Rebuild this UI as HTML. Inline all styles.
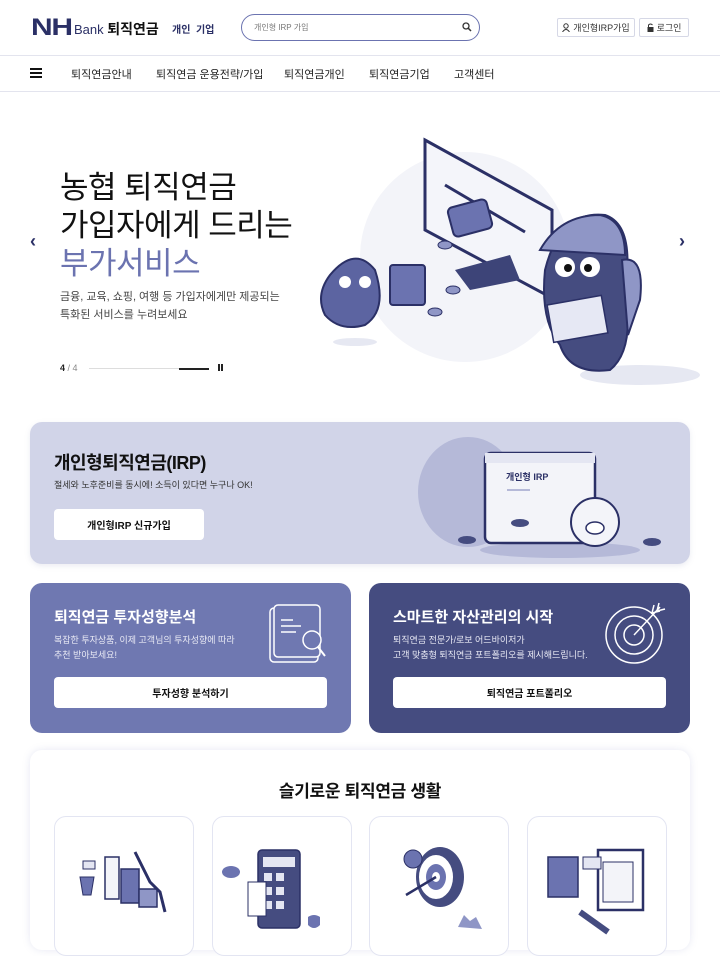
<!DOCTYPE html>
<html><head><meta charset="utf-8">
<style>
*{margin:0;padding:0;box-sizing:border-box}
body{width:720px;height:934px;overflow:hidden;background:#fff;font-family:"Liberation Sans","Noto Sans CJK KR",sans-serif;color:#111;position:relative}
.a{position:absolute}
.btn{position:absolute;border:1px solid #d6d8e6;border-radius:2px;font-size:9px;color:#333;display:flex;align-items:center;justify-content:center;gap:3px;background:#fff}
.nav span{position:absolute;top:66px;font-size:11px;color:#222}
.card{position:absolute;border-radius:12px}
.wbtn{position:absolute;background:#fff;border-radius:4px;font-size:10px;font-weight:bold;color:#111;display:flex;align-items:center;justify-content:center}
.tile{position:absolute;top:816px;width:140px;height:140px;border:1px solid #e3e5f2;border-radius:12px;background:#fff}
</style></head><body>
<!-- header -->
<div class="a" style="left:31px;top:14px;font-size:24px;font-weight:900;color:#2b3066;letter-spacing:-1px;transform:scaleX(1.25);transform-origin:left">NH</div>
<div class="a" style="left:74px;top:19px;font-size:13px;color:#2b3066">Bank <b style="color:#111;font-size:14px">퇴직연금</b></div>
<div class="a" style="left:172px;top:21px;font-size:10px;font-weight:bold;color:#2b3066">개인 &nbsp;기업</div>
<div class="a" style="left:241px;top:14px;width:239px;height:27px;border:1.5px solid #6b73b0;border-radius:14px"></div>
<div class="a" style="left:254px;top:22px;font-size:8px;color:#777">개인형 IRP 가입</div>
<svg class="a" style="left:462px;top:22px" width="10" height="10"><circle cx="4" cy="4" r="3" fill="none" stroke="#333" stroke-width="1.3"/><line x1="6.2" y1="6.2" x2="9" y2="9" stroke="#333" stroke-width="1.5"/></svg>
<div class="btn" style="left:557px;top:18px;width:78px;height:19px"><svg width="8" height="9"><circle cx="4" cy="3" r="2.2" fill="none" stroke="#333"/><path d="M0.5 9 Q4 4 7.5 9" fill="none" stroke="#333"/></svg>개인형IRP가입</div>
<div class="btn" style="left:639px;top:18px;width:50px;height:19px"><svg width="7" height="9"><rect x="0.5" y="4" width="6" height="5" fill="#333"/><path d="M1.5 4 V2 Q3.5 0 5.5 2" fill="none" stroke="#333"/></svg>로그인</div>
<div class="a" style="left:0;top:55px;width:720px;height:1px;background:#e3e4ee"></div>
<!-- nav -->
<div class="a" style="left:30px;top:68px;width:12px;height:2px;background:#111;box-shadow:0 4px 0 #111,0 8px 0 #111"></div>
<div class="nav"><span style="left:71px">퇴직연금안내</span><span style="left:156px">퇴직연금 운용전략/가입</span><span style="left:284px">퇴직연금개인</span><span style="left:369px">퇴직연금기업</span><span style="left:454px">고객센터</span></div>
<div class="a" style="left:0;top:91px;width:720px;height:1px;background:#e3e4ee"></div>
<!-- hero -->
<div class="a" style="left:360px;top:152px;width:210px;height:210px;border-radius:50%;background:#f3f4f9"></div>
<div class="a" style="left:60px;top:169px;font-size:31px;line-height:38px;color:#111;letter-spacing:-0.5px">농협 퇴직연금<br>가입자에게 드리는<br><span style="color:#6b73b0">부가서비스</span></div>
<div class="a" style="left:60px;top:288px;font-size:11px;line-height:18px;color:#444">금융, 교육, 쇼핑, 여행 등 가입자에게만 제공되는<br>특화된 서비스를 누려보세요</div>
<div class="a" style="left:30px;top:231px;font-size:18px;color:#2b3066;font-weight:bold">‹</div>
<div class="a" style="left:679px;top:231px;font-size:18px;color:#2b3066;font-weight:bold">›</div>
<div class="a" style="left:60px;top:363px;font-size:9px;color:#222"><b>4</b> <span style="color:#888">/ 4</span></div>
<div class="a" style="left:89px;top:368px;width:120px;height:1px;background:#ddd"></div>
<div class="a" style="left:179px;top:368px;width:30px;height:2px;background:#222"></div>
<div class="a" style="left:218px;top:364px;width:2px;height:7px;background:#222;box-shadow:3px 0 0 #222"></div>
<!-- hero illustration -->
<svg class="a" style="left:300px;top:120px" width="420" height="280">
<polygon points="125,20 252,90 252,178 125,110" fill="#f4f5fa" stroke="#2b3066" stroke-width="3"/>
<line x1="145" y1="65" x2="225" y2="112" stroke="#2b3066" stroke-width="3"/>
<polygon points="155,150 210,135 220,160 170,170" fill="#3d4478"/>
<rect x="150" y="83" width="40" height="30" rx="5" fill="#6b73b0" stroke="#2b3066" stroke-width="2" transform="rotate(-15 170 98)"/>
<ellipse cx="55" cy="222" rx="22" ry="4" fill="#e6e8f2"/>
<path d="M30 155 Q55 125 75 150 Q88 190 65 205 Q40 212 25 195 Q15 175 30 155Z" fill="#5c64a1" stroke="#2b3066" stroke-width="2"/>
<circle cx="45" cy="162" r="6" fill="#fff"/><circle cx="65" cy="162" r="6" fill="#fff"/>
<rect x="90" y="145" width="35" height="40" rx="3" fill="#6b73b0" stroke="#2b3066" stroke-width="2"/>
<ellipse cx="340" cy="255" rx="60" ry="10" fill="#e6e8f2"/>
<path d="M245 150 Q260 90 305 95 Q335 105 325 170 Q335 230 310 250 Q270 255 260 225 Q240 200 245 150Z" fill="#454c80" stroke="#2b3066" stroke-width="2"/>
<path d="M240 130 Q260 95 300 95 Q325 100 325 135 Z" fill="#8f96c6" stroke="#2b3066" stroke-width="2"/>
<circle cx="265" cy="147" r="10" fill="#fff"/><circle cx="290" cy="147" r="10" fill="#fff"/>
<circle cx="268" cy="148" r="4" fill="#111"/><circle cx="288" cy="148" r="4" fill="#111"/>
<rect x="250" y="180" width="55" height="38" fill="#e6e8f4" stroke="#2b3066" stroke-width="1.5" transform="rotate(-10 277 199)"/>
<path d="M322 140 Q345 135 340 180 L328 215 Z" fill="#8f96c6" stroke="#2b3066" stroke-width="2"/>
<ellipse cx="145" cy="125" rx="7" ry="4" fill="#8f96c6" stroke="#2b3066"/>
<ellipse cx="153" cy="170" rx="7" ry="4" fill="#8f96c6" stroke="#2b3066"/>
<ellipse cx="135" cy="192" rx="7" ry="4" fill="#8f96c6" stroke="#2b3066"/>
</svg>
<!-- IRP card -->
<div class="card" style="left:30px;top:422px;width:660px;height:142px;background:#d1d4e8;box-shadow:0 2px 6px rgba(120,125,170,.15)"></div>
<div class="a" style="left:54px;top:449px;font-size:18px;font-weight:bold;letter-spacing:-0.5px">개인형퇴직연금(IRP)</div>
<div class="a" style="left:54px;top:478px;font-size:9px;color:#333">절세와 노후준비를 동시에! 소득이 있다면 누구나 OK!</div>
<div class="wbtn" style="left:54px;top:509px;width:150px;height:31px">개인형IRP 신규가입</div>
<div class="a" style="left:418px;top:437px;width:100px;height:110px;border-radius:50%;background:#b5b9d8"></div>
<svg class="a" style="left:450px;top:450px" width="220" height="115">
<ellipse cx="110" cy="100" rx="80" ry="8" fill="#b5b9d8"/>
<rect x="35" y="3" width="110" height="90" rx="6" fill="#f3f4f9" stroke="#2b3066" stroke-width="2.5"/>
<rect x="35" y="3" width="110" height="10" fill="#e4e6f2"/>
<text x="56" y="30" font-size="9" font-weight="bold" fill="#2b3066" font-family="Liberation Sans,Noto Sans CJK KR,sans-serif">개인형 IRP</text>
<line x1="57" y1="40" x2="80" y2="40" stroke="#b5b9d8" stroke-width="2"/>
<ellipse cx="70" cy="73" rx="9" ry="4" fill="#454c80"/>
<circle cx="145" cy="72" r="24" fill="#f3f4f9" stroke="#2b3066" stroke-width="2"/>
<ellipse cx="145" cy="78" rx="9" ry="6" fill="#fff" stroke="#2b3066" stroke-width="1.5"/>
<ellipse cx="17" cy="90" rx="9" ry="4" fill="#454c80"/><ellipse cx="202" cy="92" rx="9" ry="4" fill="#454c80"/>
</svg>
<!-- two cards -->
<div class="card" style="left:30px;top:583px;width:321px;height:150px;background:#6f78b1"></div>
<div class="a" style="left:54px;top:606px;font-size:15px;font-weight:bold;color:#fff">퇴직연금 투자성향분석</div>
<div class="a" style="left:54px;top:633px;font-size:9px;line-height:15px;color:#e8e9f4">복잡한 투자상품, 이제 고객님의 투자성향에 따라<br>추천 받아보세요!</div>
<svg class="a" style="left:268px;top:603px" width="60" height="62"><rect x="2" y="5" width="48" height="54" rx="4" fill="none" stroke="#fff" stroke-width="1.5"/><rect x="6" y="2" width="46" height="52" rx="4" fill="#6f78b1" stroke="#fff" stroke-width="1.5"/><line x1="13" y1="17" x2="25" y2="17" stroke="#fff" stroke-width="1.5"/><line x1="13" y1="23" x2="33" y2="23" stroke="#fff" stroke-width="1.5"/><line x1="13" y1="29" x2="28" y2="29" stroke="#fff" stroke-width="1.5"/><circle cx="44" cy="37" r="9" fill="#6f78b1" stroke="#fff" stroke-width="1.5"/><line x1="50" y1="44" x2="57" y2="53" stroke="#fff" stroke-width="2"/></svg>
<div class="wbtn" style="left:54px;top:677px;width:273px;height:31px">투자성향 분석하기</div>
<div class="card" style="left:369px;top:583px;width:321px;height:150px;background:#454c80"></div>
<div class="a" style="left:393px;top:606px;font-size:15px;font-weight:bold;color:#fff">스마트한 자산관리의 시작</div>
<div class="a" style="left:393px;top:633px;font-size:9px;line-height:15px;color:#e8e9f4">퇴직연금 전문가/로보 어드바이저가<br>고객 맞춤형 퇴직연금 포트폴리오를 제시해드립니다.</div>
<svg class="a" style="left:604px;top:601px" width="64" height="64"><circle cx="30" cy="34" r="28" fill="none" stroke="#fff" stroke-width="1.5"/><circle cx="30" cy="34" r="19" fill="none" stroke="#fff" stroke-width="1.5"/><circle cx="30" cy="34" r="10" fill="none" stroke="#fff" stroke-width="1.5"/><line x1="30" y1="34" x2="56" y2="6" stroke="#fff" stroke-width="1.5"/><path d="M50 4 L48 12 L56 10 M55 2 L53 10 L61 8" fill="none" stroke="#fff" stroke-width="1.5"/></svg>
<div class="wbtn" style="left:393px;top:677px;width:273px;height:31px">퇴직연금 포트폴리오</div>
<!-- bottom section -->
<div class="card" style="left:30px;top:750px;width:660px;height:200px;background:#fff;box-shadow:0 0 8px rgba(120,125,190,.18)"></div>
<div class="a" style="left:0;top:777px;width:720px;text-align:center;font-size:17px;font-weight:bold;letter-spacing:-0.3px">슬기로운 퇴직연금 생활</div>
<div class="tile" style="left:54px"><svg width="140" height="120"><rect x="50" y="40" width="14" height="42" fill="#f3f4f9" stroke="#2b3066" stroke-width="1.5"/><rect x="66" y="52" width="18" height="34" fill="#6b73b0" stroke="#2b3066" stroke-width="1.5"/><rect x="84" y="72" width="18" height="18" fill="#8f96c6" stroke="#2b3066" stroke-width="1.5"/><path d="M80 35 L95 65 L105 75 L110 95" fill="none" stroke="#2b3066" stroke-width="3"/><path d="M25 60 h14 l-3 18 h-8z" fill="#6b73b0" stroke="#2b3066"/><rect x="28" y="44" width="12" height="8" fill="#e4e6f2" stroke="#2b3066"/></svg></div>
<div class="tile" style="left:212px"><svg width="140" height="120"><rect x="45" y="33" width="42" height="78" rx="4" fill="#454c80" stroke="#2b3066" stroke-width="1.5"/><rect x="50" y="40" width="32" height="10" fill="#e4e6f2"/><g fill="#e4e6f2"><rect x="51" y="56" width="8" height="8"/><rect x="63" y="56" width="8" height="8"/><rect x="51" y="70" width="8" height="8"/><rect x="63" y="70" width="8" height="8"/><rect x="51" y="84" width="8" height="8"/><rect x="63" y="84" width="8" height="8"/></g><rect x="35" y="65" width="18" height="34" fill="#fff" stroke="#2b3066"/><ellipse cx="18" cy="55" rx="9" ry="6" fill="#6b73b0"/><path d="M95 100 q6 -4 12 0 v8 q-6 6 -12 0z" fill="#6b73b0"/></svg></div>
<div class="tile" style="left:369px"><svg width="140" height="120"><ellipse cx="70" cy="60" rx="24" ry="30" fill="#454c80"/><ellipse cx="66" cy="60" rx="17" ry="22" fill="#fff"/><ellipse cx="66" cy="60" rx="10" ry="13" fill="#6b73b0"/><ellipse cx="66" cy="60" rx="4" ry="5" fill="#fff"/><line x1="36" y1="78" x2="66" y2="60" stroke="#2b3066" stroke-width="2.5"/><circle cx="43" cy="42" r="9" fill="#6b73b0" stroke="#2b3066"/><path d="M88 110 l6 -12 l6 6 l6 -4 l6 12z" fill="#8f96c6"/></svg></div>
<div class="tile" style="left:527px"><svg width="140" height="120"><rect x="20" y="40" width="30" height="40" fill="#6b73b0" stroke="#2b3066" stroke-width="1.5"/><rect x="70" y="33" width="45" height="60" fill="#fff" stroke="#2b3066" stroke-width="2.5"/><rect x="75" y="45" width="30" height="40" fill="#f3f4f9" stroke="#2b3066"/><rect x="55" y="40" width="18" height="12" fill="#e4e6f2" stroke="#2b3066"/><line x1="52" y1="95" x2="80" y2="115" stroke="#454c80" stroke-width="6"/></svg></div>
</body></html>
